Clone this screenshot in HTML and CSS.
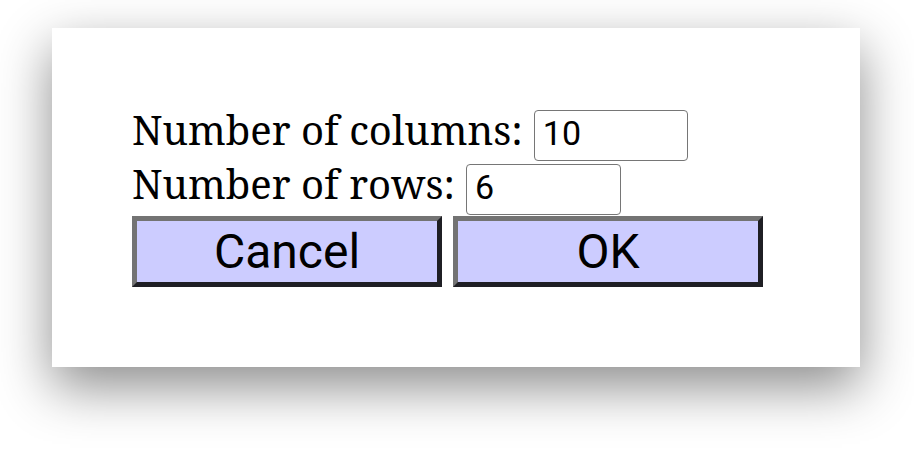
FILE: index.html
```
<!DOCTYPE html>
<html>
<head>
<meta charset="utf-8">
<link rel="stylesheet" href="styles.css">
</head>
<body>
<div class="page">
  <div class="dialog">
    <div class="row">
      <span class="label">Number of columns:</span>
      <input class="field field-cols" type="text" value="10">
    </div>
    <div class="row">
      <span class="label">Number of rows:</span>
      <input class="field field-rows" type="text" value="6">
    </div>
    <div class="buttons">
      <button class="btn">Cancel</button>
      <button class="btn">OK</button>
    </div>
  </div>
</div>
</body>
</html>
```
FILE: styles.css
```
html, body {
  margin: 0;
  padding: 0;
  background: #ffffff;
}
.page {
  box-sizing: border-box;
  min-height: 451px;
  display: flex;
  align-items: flex-start;
  padding: 28px 0 0 52px;
  overflow: hidden;
}
.dialog {
  box-sizing: border-box;
  width: 808px;
  height: 339px;
  padding: 80px 80px;
  background: #ffffff;
  box-shadow: 0 20px 50px rgba(0, 0, 0, 0.45);
  display: flex;
  flex-direction: column;
}
.row {
  display: flex;
  align-items: center;
  gap: 11px;
  height: 54px;
}
.label {
  font-family: "Noto Serif", "DejaVu Serif", serif;
  font-size: 40px;
  line-height: 44px;
  padding-bottom: 10px;
  color: #000;
  white-space: nowrap;
}
.field {
  box-sizing: border-box;
  height: 51px;
  margin: 0;
  padding: 0 0 5px 8px;
  border: 1px solid #767676;
  border-radius: 4px;
  font-family: Roboto, "Liberation Sans", sans-serif;
  font-size: 34px;
  color: #000;
  background: #fff;
  outline: none;
}
.field-cols { width: 154px; }
.field-rows { width: 155px; }
.buttons {
  display: flex;
  gap: 11px;
}
.btn {
  box-sizing: border-box;
  width: 310px;
  height: 71px;
  margin: 0;
  padding: 0;
  background: #ccccff;
  border-style: solid;
  border-width: 5px;
  border-color: #737373 #1f1f24 #1f1f24 #737373;
  font-family: Roboto, "Liberation Sans", sans-serif;
  font-size: 48px;
  color: #000;
}
```
